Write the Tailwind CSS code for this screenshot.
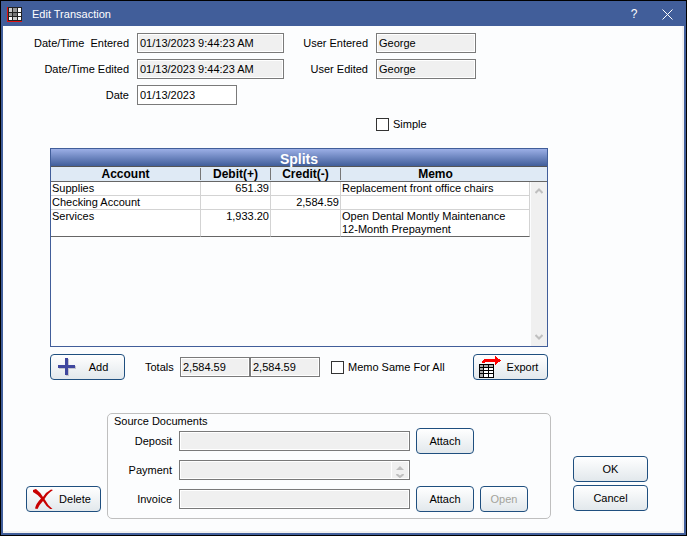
<!DOCTYPE html>
<html lang="en">
<head>
  <meta charset="UTF-8">
  <meta name="viewport" content="width=device-width,initial-scale=1">
  <title>Edit Transaction</title>
  <script src="https://cdn.jsdelivr.net/npm/@tailwindcss/browser@4"></script>
</head>
<body class="bg-black p-px min-h-screen flex font-['Liberation_Sans',Arial,sans-serif] text-[11px] leading-[13px] text-black">
  <div class="flex-1 flex flex-col bg-[#415e9a] px-[2px] pb-[2px]">

    <!-- Title bar -->
    <header class="flex items-center h-[25px] pt-[2px] pl-1 pr-[7px] text-white">
      <svg class="w-[15px] h-[15px]" viewBox="0 0 15 15" shape-rendering="crispEdges">
        <rect width="15" height="15" fill="#222"/>
        <path d="M0 0h1v15H0zM0 14h15v1H0z" fill="#e01010"/>
        <path d="M2 1h3v4H2zM6 10h4v3H6z" fill="#ccc"/>
        <path d="M6 1h4v4H6zM2 6h3v3H2z" fill="#999"/>
        <path d="M6 6h4v3H6z" fill="#777"/>
        <path d="M11 1h3v4h-3zM11 6h3v3h-3zM2 10h3v3H2zM11 10h3v3h-3z" fill="#fff"/>
      </svg>
      <h1 class="ml-[10px] flex-1">Edit Transaction</h1>
      <button type="button" aria-label="Help" class="w-5 text-[12px]">?</button>
      <button type="button" aria-label="Close" class="ml-[14px] p-1">
        <svg class="w-[11px] h-[11px]" viewBox="0 0 11 11" fill="none" stroke="#fff"><path d="M.5 .5l10 10M10.500 .5l-10 10"/></svg>
      </button>
    </header>

    <main class="flex-1 bg-[#fcfdfe] border-r-2 border-b-2 border-[#f0f0f0] pt-[7px]">
      <div class="grid grid-cols-[126px_147px_76px_100px] gap-x-2 gap-y-[6px] items-center">
        <label for="entered" class="pt-px text-right whitespace-pre">Date/Time  Entered</label>
        <input id="entered" readonly value="01/13/2023 9:44:23 AM" class="h-5 w-full px-[2px] pb-px border border-[#7a7a7a] bg-[#f0f0f0] shadow-[inset_0_0_0_1px_#fff]">
        <label for="user-entered" class="pt-px text-right">User Entered</label>
        <input id="user-entered" readonly value="George" class="h-5 w-full px-[2px] pb-px border border-[#7a7a7a] bg-[#f0f0f0] shadow-[inset_0_0_0_1px_#fff]">
        <label for="edited" class="pt-px text-right">Date/Time Edited</label>
        <input id="edited" readonly value="01/13/2023 9:44:23 AM" class="h-5 w-full px-[2px] pb-px border border-[#7a7a7a] bg-[#f0f0f0] shadow-[inset_0_0_0_1px_#fff]">
        <label for="user-edited" class="pt-px text-right">User Edited</label>
        <input id="user-edited" readonly value="George" class="h-5 w-full px-[2px] pb-px border border-[#7a7a7a] bg-[#f0f0f0] shadow-[inset_0_0_0_1px_#fff]">
        <label for="date" class="pt-px text-right">Date</label>
        <input id="date" value="01/13/2023" class="h-5 w-[100px] px-[2px] pb-px border border-[#7a7a7a] bg-white">
      </div>

      <label class="mt-[13px] ml-[373px] flex items-center gap-1 w-fit">
        <input type="checkbox" class="appearance-none w-[13px] h-[13px] border border-[#333] bg-white">
        Simple
      </label>

      <!-- Splits grid -->
      <section class="mt-[17px] ml-[47px] mr-[134px] h-[199px] flex flex-col border border-[#415e9a]">
        <h2 class="h-[18px] shrink-0 border-b border-[#555] bg-linear-to-b from-[#9cafe6] to-[#415e9a] text-white text-[14px] leading-[20px] font-bold text-center">Splits</h2>
        <div class="flex-1 flex">
          <div class="flex-1">
            <table class="w-full table-fixed border-separate border-spacing-0">
              <thead>
                <tr class="h-[15px] bg-[#dfeaf5] text-[12px]">
                  <th class="w-[150px] p-0 border-b border-[#666]"><div class="h-3 leading-3 border-r border-[#777]">Account</div></th>
                  <th class="w-[70px] p-0 border-b border-[#666]"><div class="h-3 leading-3 border-r border-[#777]">Debit(+)</div></th>
                  <th class="w-[70px] p-0 border-b border-[#666]"><div class="h-3 leading-3 border-r border-[#777]">Credit(-)</div></th>
                  <th class="p-0 border-b border-[#666]"><div class="h-3 leading-3">Memo</div></th>
                </tr>
              </thead>
              <tbody class="bg-white align-top">
                <tr>
                  <td class="p-0 pl-px border-r border-b border-[#d3d3d3]">Supplies</td>
                  <td class="p-0 pr-px border-r border-b border-[#d3d3d3] text-right">651.39</td>
                  <td class="p-0 pr-px border-r border-b border-[#d3d3d3] text-right"></td>
                  <td class="p-0 pl-px border-r border-b border-[#d3d3d3]">Replacement front office chairs</td>
                </tr>
                <tr>
                  <td class="p-0 pl-px border-r border-b border-[#d3d3d3]">Checking Account</td>
                  <td class="p-0 pr-px border-r border-b border-[#d3d3d3] text-right"></td>
                  <td class="p-0 pr-px border-r border-b border-[#d3d3d3] text-right">2,584.59</td>
                  <td class="p-0 pl-px border-r border-b border-[#d3d3d3]"></td>
                </tr>
                <tr>
                  <td class="p-0 pl-px border-r border-b border-r-[#d3d3d3] border-b-[#666]">Services</td>
                  <td class="p-0 pr-px border-r border-b border-r-[#d3d3d3] border-b-[#666] text-right">1,933.20</td>
                  <td class="p-0 pr-px border-r border-b border-r-[#d3d3d3] border-b-[#666] text-right"></td>
                  <td class="p-0 pl-px border-r border-b border-r-[#d3d3d3] border-b-[#666]">Open Dental Montly Maintenance<br>12-Month Prepayment</td>
                </tr>
              </tbody>
            </table>
          </div>
          <div class="w-[17px] flex flex-col">
            <div class="h-[15px] bg-[#dfeaf5] border-b border-[#666]"></div>
            <div class="flex-1 ml-px py-[6px] bg-[#f0f0f0] flex flex-col justify-between items-center">
              <svg class="w-2 h-[6px]" viewBox="0 0 8 6" fill="none" stroke="#bfbfbf" stroke-width="2"><path d="M.5 5L4 1.500 7.500 5"/></svg>
              <svg class="w-2 h-[6px]" viewBox="0 0 8 6" fill="none" stroke="#bfbfbf" stroke-width="2"><path d="M.5 1L4 4.500 7.500 1"/></svg>
            </div>
          </div>
        </div>
      </section>

      <div class="mt-[7px] ml-[47px] mr-[134px] flex items-center">
        <button type="button" class="w-[75px] h-[26px] pl-[7px] pr-[3px] flex items-center rounded-[4px] border border-[#1f4f7f] bg-linear-to-b from-white to-[#e2e8ec]">
          <svg class="w-[18px] h-[18px]" viewBox="0 0 18 18" shape-rendering="crispEdges">
            <path d="M8 1h3v7h7v3h-7v7H8v-7H1V8h7z" fill="#c4c4cc"/>
            <path d="M7 0h3v7h7v3h-7v7H7v-7H0V7h7z" fill="#3f479e"/>
          </svg>
          <span class="flex-1">Add</span>
        </button>
        <label for="total-debit" class="ml-5 w-7 pt-px">Totals</label>
        <input id="total-debit" readonly value="2,584.59" class="ml-[7px] h-5 w-[70px] px-[2px] pb-px border border-[#7a7a7a] bg-[#f0f0f0] shadow-[inset_0_0_0_1px_#fff]">
        <input aria-label="Total credit" readonly value="2,584.59" class="h-5 w-[70px] px-[2px] pb-px border border-[#7a7a7a] bg-[#f0f0f0] shadow-[inset_0_0_0_1px_#fff]">
        <label class="ml-[11px] flex items-center gap-1">
          <input type="checkbox" class="appearance-none w-[13px] h-[13px] border border-[#333] bg-white">
          Memo Same For All
        </label>
        <button type="button" class="ml-auto w-[75px] h-[26px] pl-[5px] pr-[3px] flex items-center rounded-[4px] border border-[#1f4f7f] bg-linear-to-b from-white to-[#e2e8ec]">
          <svg class="w-[22px] h-[22px]" viewBox="0 0 22 22" shape-rendering="crispEdges">
            <path d="M0 8h15v14H0z" fill="#000"/>
            <path d="M1 9h3v2H1zM5 9h4v2H5zM10 9h4v2h-4zM1 12h3v2H1zM1 15h3v2H1zM1 18h3v3H1z" fill="#aaa"/>
            <path d="M5 12h4v2H5zM10 12h4v2h-4zM5 15h4v2H5zM10 15h4v2h-4zM5 18h4v3H5zM10 18h4v3h-4z" fill="#fff"/>
            <path d="M3 7V5l2-2h11V0l6 4.500L16 9V6H6L5 7z" fill="#f00"/>
          </svg>
          <span class="flex-1">Export</span>
        </button>
      </div>

      <div class="mt-[33px] ml-[23px] mr-[34px] flex items-end">
        <button type="button" class="mb-[7px] w-[75px] h-[26px] pl-[6px] pr-[3px] flex items-center rounded-[4px] border border-[#1f4f7f] bg-linear-to-b from-white to-[#e2e8ec]">
          <svg class="w-5 h-5" viewBox="0 0 20 20" fill="#c80000"><path d="M0 1l3-1q4 3 7 8 3-5 8-7.500l2 .5q-5 3-8.500 9 3 6 8 10l-1.500 .5q-5-3-8-8.500-4 4-5.500 8l-2.500-.5q1-5 6-10Q4 5 0 3z"/></svg>
          <span class="flex-1">Delete</span>
        </button>

        <fieldset class="ml-[6px] flex-1 h-[106px] rounded-[5px] border border-[#bfbfbf]">
          <legend class="float-left w-full h-[14px] pl-[6px] pt-px">Source Documents</legend>
          <div class="clear-both grid grid-cols-[65px_1fr_58px_48px] auto-rows-[26px] gap-x-[6px] gap-y-[3px] pr-[22px] items-center">
            <label for="deposit" class="pr-px pt-px text-right">Deposit</label>
            <input id="deposit" readonly class="h-5 w-full border border-[#7a7a7a] bg-[#f0f0f0] shadow-[inset_0_0_0_1px_#fff]">
            <button type="button" class="h-[26px] rounded-[4px] border border-[#1f4f7f] bg-linear-to-b from-white to-[#e2e8ec]">Attach</button>

            <label for="payment" class="col-start-1 pr-px pt-px text-right">Payment</label>
            <div class="h-5 p-px flex border border-[#7a7a7a] bg-white">
              <textarea id="payment" readonly rows="1" class="flex-1 min-w-0 resize-none overflow-hidden bg-[#f0f0f0]"></textarea>
              <div class="ml-px w-4 pt-1 bg-[#f0f0f0] flex flex-col items-center gap-1">
                <svg class="w-2 h-1" viewBox="0 0 8 4" fill="#bfbfbf"><path d="M0 4l4-4 4 4z"/></svg>
                <svg class="w-2 h-1" viewBox="0 0 8 4" fill="none" stroke="#bfbfbf" stroke-width="2"><path d="M.5 0L4 3 7.500 0"/></svg>
              </div>
            </div>

            <label for="invoice" class="col-start-1 pr-px pt-px text-right">Invoice</label>
            <input id="invoice" readonly class="h-5 w-full border border-[#7a7a7a] bg-[#f0f0f0] shadow-[inset_0_0_0_1px_#fff]">
            <button type="button" class="h-[26px] rounded-[4px] border border-[#1f4f7f] bg-linear-to-b from-white to-[#e2e8ec]">Attach</button>
            <button type="button" disabled class="h-[26px] rounded-[4px] border border-[#1f4f7f] bg-linear-to-b from-white to-[#e2e8ec] text-[#a3a39b]">Open</button>
          </div>
        </fieldset>

        <div class="ml-[22px] mb-2 flex flex-col gap-[3px]">
          <button type="button" class="w-[75px] h-[26px] rounded-[4px] border border-[#1f4f7f] bg-linear-to-b from-white to-[#e2e8ec]">OK</button>
          <button type="button" class="w-[75px] h-[26px] rounded-[4px] border border-[#1f4f7f] bg-linear-to-b from-white to-[#e2e8ec]">Cancel</button>
        </div>
      </div>
    </main>
  </div>
</body>
</html>
